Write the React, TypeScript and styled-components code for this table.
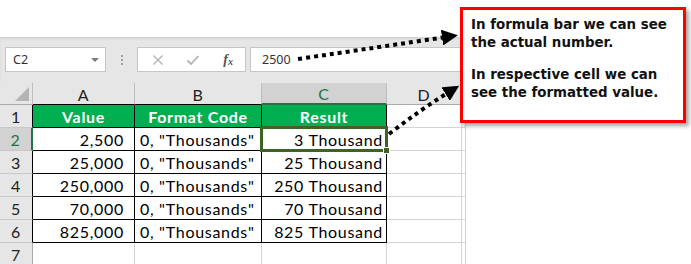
import React from 'react';
import styled, { createGlobalStyle } from 'styled-components';

const GlobalStyle = createGlobalStyle`
  body {
    margin: 0;
    background: #fff;
  }
`;

const GRID = '#d4d4d4';
const HEAD_BG = '#e6e6e6';
const HEAD_SEL = '#d2d2d2';
const XL_GREEN = '#217346';

const rows = [
  { value: '2,500', code: '0, "Thousands"', result: '3 Thousand' },
  { value: '25,000', code: '0, "Thousands"', result: '25 Thousand' },
  { value: '250,000', code: '0, "Thousands"', result: '250 Thousand' },
  { value: '70,000', code: '0, "Thousands"', result: '70 Thousand' },
  { value: '825,000', code: '0, "Thousands"', result: '825 Thousand' },
];

const App = () => {
  return (
    <>
      <GlobalStyle />
      <Page>
        <Excel>
          <TopBand />
          <Toolbar>
            <NameBox>
              <span>C2</span>
              <Caret />
            </NameBox>
            <Grip>
              <i />
              <i />
              <i />
            </Grip>
            <FxButtons>
              <svg width="12" height="12" viewBox="0 0 12 12">
                <path d="M1.5 1.5 L10.5 10.5 M10.5 1.5 L1.5 10.5" stroke="#b3b3b3" strokeWidth="1.4" fill="none" />
              </svg>
              <svg width="14" height="12" viewBox="0 0 14 12">
                <path d="M1.5 6.5 L5 10 L12.5 2" stroke="#b3b3b3" strokeWidth="1.8" fill="none" />
              </svg>
              <FxLabel>
                f<sub>x</sub>
              </FxLabel>
            </FxButtons>
            <FormulaInput>2500</FormulaInput>
          </Toolbar>
          <Sheet>
            <Corner>
              <Triangle />
            </Corner>
            <ColHead $edge="#000">A</ColHead>
            <ColHead $edge="#000">B</ColHead>
            <ColHead $sel>C</ColHead>
            <ColHead>D</ColHead>
            <ColHead />

            <RowHead $table>1</RowHead>
            <Cell $table $head>Value</Cell>
            <Cell $table $head>Format Code</Cell>
            <Cell $table $head>Result</Cell>
            <Cell />
            <Cell />

            {rows.map((r, i) => (
              <React.Fragment key={r.value}>
                <RowHead $table $sel={i === 0}>
                  {i + 2}
                </RowHead>
                <Cell $table $align="right" $pad={10}>
                  {r.value}
                </Cell>
                <Cell $table $align="left" $pad={5}>
                  {r.code}
                </Cell>
                <Cell $table $align="right" $pad={3}>
                  {r.result}
                  {i === 0 && (
                    <Selection>
                      <FillHandle />
                    </Selection>
                  )}
                </Cell>
                <Cell />
                <Cell />
              </React.Fragment>
            ))}

            <RowHead>7</RowHead>
            <Cell />
            <Cell />
            <Cell />
            <Cell />
            <Cell />
          </Sheet>
        </Excel>

        <Callout>
          <p>In formula bar we can see the actual number.</p>
          <p>In respective cell we can see the formatted value.</p>
        </Callout>

        <Arrows width="691" height="264" viewBox="0 0 691 264">
          <defs>
            <marker id="head" markerWidth="4" markerHeight="4" refX="1" refY="2" orient="auto" markerUnits="strokeWidth">
              <path d="M0 0 L4 2 L0 4 Z" fill="#000" />
            </marker>
          </defs>
          <path d="M298 59 Q380 47 446 37" stroke="#000" strokeWidth="4" strokeDasharray="4 4" fill="none" markerEnd="url(#head)" />
          <path d="M389 134 Q420 110 449 92" stroke="#000" strokeWidth="4" strokeDasharray="4 4" fill="none" markerEnd="url(#head)" />
        </Arrows>
      </Page>
    </>
  );
};

const Page = styled.div`
  position: relative;
  width: 691px;
  height: 264px;
  overflow: hidden;
  background: #fff;
`;

const Excel = styled.div`
  width: 466px;
  display: flex;
  flex-direction: column;
`;

const TopBand = styled.div`
  height: 37px;
  background: #fff;
`;

const Toolbar = styled.div`
  height: 46px;
  box-sizing: border-box;
  padding: 10px 0 11px 5px;
  background: ${HEAD_BG};
  box-shadow: inset 0 2px 2px rgba(0, 0, 0, 0.08);
  display: flex;
  align-items: stretch;
  font-family: 'Noto Sans', 'Open Sans', sans-serif;
  font-size: 12.5px;
  color: #333;
`;

const NameBox = styled.div`
  width: 101px;
  box-sizing: border-box;
  background: #fff;
  border: 1px solid #c6c6c6;
  display: flex;
  align-items: center;
  justify-content: space-between;
  padding: 0 6px 0 7px;
`;

const Caret = styled.span`
  width: 0;
  height: 0;
  border-left: 4px solid transparent;
  border-right: 4px solid transparent;
  border-top: 4px solid #7a7a7a;
`;

const Grip = styled.div`
  width: 31px;
  display: flex;
  flex-direction: column;
  align-items: center;
  justify-content: center;
  gap: 2px;

  i {
    width: 2px;
    height: 2px;
    background: #a0a0a0;
  }
`;

const FxButtons = styled.div`
  width: 109px;
  box-sizing: border-box;
  background: #fff;
  border: 1px solid #c6c6c6;
  display: flex;
  align-items: center;
  padding: 0 12px 0 14px;
  gap: 20px;

  svg:nth-child(2) {
    margin-left: 2px;
  }
`;

const FxLabel = styled.span`
  margin-left: auto;
  font-family: 'Liberation Serif', serif;
  font-style: italic;
  font-weight: bold;
  font-size: 14px;
  color: #555;

  sub {
    font-size: 10px;
    vertical-align: -1px;
  }
`;

const FormulaInput = styled.div`
  flex: 1;
  margin-left: 4px;
  background: #fff;
  border: 1px solid #c6c6c6;
  border-right: none;
  display: flex;
  align-items: center;
  padding-left: 11px;
`;

const Sheet = styled.div`
  display: grid;
  grid-template-columns: 33px 102px 127px 125px 75px 4px;
  grid-template-rows: 22px repeat(7, 23px);
  font-family: Lato, 'Liberation Sans', sans-serif;
  font-size: 16px;
  letter-spacing: 0.7px;
  color: #000;
`;

const Corner = styled.div`
  background: ${HEAD_BG};
  border-right: 1px solid #bdbdbd;
  border-bottom: 1px solid #ababab;
  display: flex;
  align-items: flex-end;
  justify-content: flex-end;
  padding: 0 3px 3px 0;
`;

const Triangle = styled.span`
  width: 0;
  height: 0;
  border-left: 14px solid transparent;
  border-bottom: 14px solid #b4b4b4;
`;

const ColHead = styled.div<{ $sel?: boolean; $edge?: string }>`
  box-sizing: border-box;
  background: ${({ $sel }) => ($sel ? HEAD_SEL : HEAD_BG)};
  border-right: 1px solid #bdbdbd;
  border-bottom: ${({ $sel, $edge }) => ($sel ? `2px solid ${XL_GREEN}` : `1px solid ${$edge || '#ababab'}`)};
  color: ${({ $sel }) => ($sel ? XL_GREEN : '#222')};
  display: flex;
  align-items: center;
  justify-content: center;
  padding-top: 1px;
`;

const RowHead = styled.div<{ $sel?: boolean; $table?: boolean }>`
  box-sizing: border-box;
  background: ${({ $sel }) => ($sel ? HEAD_SEL : HEAD_BG)};
  border-bottom: 1px solid #c8c8c8;
  border-right: ${({ $sel, $table }) =>
    $sel ? `2px solid ${XL_GREEN}` : `1px solid ${$table ? '#000' : '#ababab'}`};
  color: ${({ $sel }) => ($sel ? XL_GREEN : '#222')};
  display: flex;
  align-items: center;
  justify-content: center;
`;

const Cell = styled.div<{ $table?: boolean; $head?: boolean; $align?: string; $pad?: number }>`
  position: relative;
  box-sizing: border-box;
  border-right: 1px solid ${({ $table }) => ($table ? '#000' : GRID)};
  border-bottom: 1px solid ${({ $table }) => ($table ? '#000' : GRID)};
  background: ${({ $head }) => ($head ? '#00b050' : '#fff')};
  color: ${({ $head }) => ($head ? '#fff' : '#000')};
  font-weight: ${({ $head }) => ($head ? 'bold' : 'normal')};
  display: flex;
  align-items: center;
  justify-content: ${({ $head, $align }) =>
    $head ? 'center' : $align === 'right' ? 'flex-end' : 'flex-start'};
  padding: 1px ${({ $align, $pad }) => ($align === 'right' ? $pad || 0 : 0)}px 0
    ${({ $align, $pad }) => ($align === 'left' ? $pad || 0 : 0)}px;
  white-space: nowrap;

  &:has(> span) {
    z-index: 2;
  }
`;

const Selection = styled.span`
  position: absolute;
  left: -2px;
  top: -2px;
  right: -2px;
  bottom: -2px;
  border: 3px solid #3e6424;
  z-index: 2;
`;

const FillHandle = styled.span`
  position: absolute;
  right: -5px;
  bottom: -5px;
  width: 5px;
  height: 5px;
  background: #3e6424;
  border: 1px solid #fff;
`;

const Callout = styled.div`
  position: absolute;
  left: 460px;
  top: 7px;
  width: 226px;
  height: 116px;
  box-sizing: border-box;
  background: #fff;
  border: 3px solid #ff0000;
  box-shadow: 3px 3px 4px rgba(0, 0, 0, 0.35);
  padding: 6px 8px 0 8px;
  font-family: 'DejaVu Sans', Verdana, sans-serif;
  font-weight: bold;
  font-size: 13.4px;
  line-height: 18px;
  color: #111;

  p {
    margin: 0 0 14px;
  }
`;

const Arrows = styled.svg`
  position: absolute;
  left: 0;
  top: 0;
  pointer-events: none;
`;

export default App;
